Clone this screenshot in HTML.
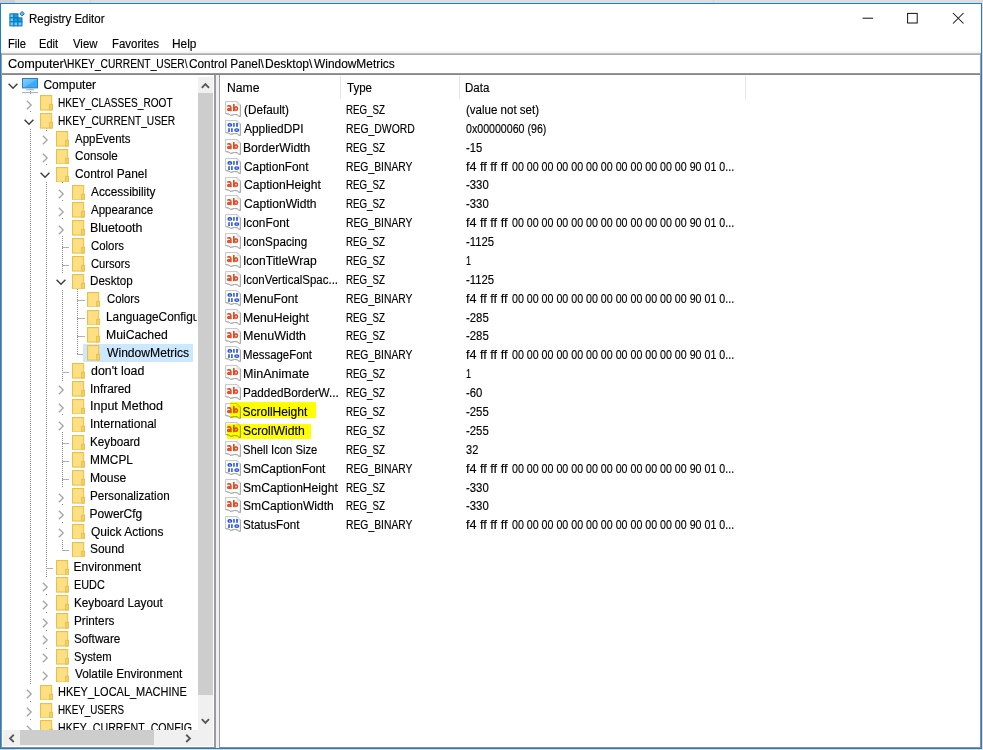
<!DOCTYPE html>
<html><head><meta charset="utf-8"><title>Registry Editor</title>
<style>
html,body{margin:0;padding:0;width:983px;height:750px;overflow:hidden;background:#dedede}
.t{position:absolute;font-family:"Liberation Sans",sans-serif;font-size:12px;line-height:14px;white-space:pre;color:#000;transform-origin:0 0;-webkit-text-stroke:0.15px #000}
</style></head><body>
<div style="position:absolute;left:0px;top:0px;width:983px;height:750px;background:#dedede;"></div><div style="position:absolute;left:0px;top:0px;width:15px;height:3px;background:#cfcfcf;"></div><div style="position:absolute;left:90px;top:0px;width:1px;height:3px;background:#d2d2d2;"></div><div style="position:absolute;left:713px;top:0px;width:1px;height:3px;background:#d2d2d2;"></div><div style="position:absolute;left:0px;top:749px;width:15px;height:1px;background:#cfcfcf;"></div><div style="position:absolute;left:0;top:3px;width:982px;height:746px;box-sizing:border-box;border:1px solid #1c7fd7;background:#fff"></div><svg style="position:absolute;left:8.5px;top:10.5px;" width="18" height="17" viewBox="-0.93 -2.84 18 17"><rect x="0.00" y="0.00" width="4.02" height="4.02" fill="#5ad1fa" stroke="#1170b6" stroke-width="1"/><rect x="4.02" y="0.00" width="4.02" height="4.02" fill="#12a7dc" stroke="#1170b6" stroke-width="1"/><rect x="0.00" y="4.02" width="4.02" height="4.02" fill="#5ad1fa" stroke="#1170b6" stroke-width="1"/><rect x="4.02" y="4.02" width="4.02" height="4.02" fill="#12a7dc" stroke="#1170b6" stroke-width="1"/><rect x="8.04" y="4.02" width="4.02" height="4.02" fill="#12a7dc" stroke="#1170b6" stroke-width="1"/><rect x="0.00" y="8.04" width="4.02" height="4.02" fill="#5ad1fa" stroke="#1170b6" stroke-width="1"/><rect x="4.02" y="8.04" width="4.02" height="4.02" fill="#5ad1fa" stroke="#1170b6" stroke-width="1"/><rect x="8.04" y="8.04" width="4.02" height="4.02" fill="#5ad1fa" stroke="#1170b6" stroke-width="1"/><path d="M12.17 -2.34 L14.37 -0.14 L12.17 2.06 L9.97 -0.14 Z" fill="#4cc8f6" stroke="#1170b6" stroke-width="1"/></svg><div class="t" style="left:29.44px;top:11.90px;transform:scaleX(0.9590);">Registry Editor</div><svg style="position:absolute;left:850px;top:5px;" width="130" height="28" viewBox="850 5 130 28"><rect x="862.6" y="17.7" width="10.5" height="1" fill="#111"/><rect x="907.6" y="13.4" width="9.6" height="9.6" fill="none" stroke="#111" stroke-width="1"/><path d="M953 13 L963.5 23.5 M963.5 13 L953 23.5" stroke="#111" stroke-width="1.05"/></svg><div class="t" style="left:7.77px;top:36.80px;transform:scaleX(0.9333);">File</div><div class="t" style="left:39.38px;top:36.80px;transform:scaleX(0.9250);">Edit</div><div class="t" style="left:73.30px;top:36.80px;transform:scaleX(0.9462);">View</div><div class="t" style="left:111.85px;top:36.80px;transform:scaleX(0.9542);">Favorites</div><div class="t" style="left:172.31px;top:36.80px;transform:scaleX(0.9917);">Help</div><div style="position:absolute;left:1px;top:51px;width:980px;height:2px;background:linear-gradient(#fbfbfb,#f0f0f0);"></div><div style="position:absolute;left:1px;top:53px;width:980px;height:1px;background:#c4c4c4;"></div><div style="position:absolute;left:1px;top:54px;width:980px;height:1px;background:#a9a9a9;"></div><div style="position:absolute;left:1px;top:73px;width:980px;height:1px;background:#96969c;"></div><div style="position:absolute;left:1px;top:74px;width:980px;height:1px;background:#84848a;"></div><div style="position:absolute;left:1px;top:53px;width:1px;height:22px;background:#a0a0a0;"></div><div style="position:absolute;left:980px;top:53px;width:1px;height:22px;background:#a0a0a0;"></div><div class="t" style="left:7.60px;top:56.90px;transform:scaleX(1.0589);">Computer\</div><div class="t" style="left:66.85px;top:56.90px;transform:scaleX(0.8532);">HKEY_CURRENT_USER\</div><div class="t" style="left:188.80px;top:56.90px;transform:scaleX(0.9842);">Control Panel\</div><div class="t" style="left:265.00px;top:56.90px;">Desktop\</div><div class="t" style="left:313.60px;top:56.90px;transform:scaleX(0.9926);">WindowMetrics</div><div style="position:absolute;left:1px;top:75px;width:1px;height:673px;background:#8e8f94;"></div><div style="position:absolute;left:214px;top:75px;width:1.5px;height:673px;background:#9a9ba0;"></div><div style="position:absolute;left:1px;top:747px;width:215px;height:1px;background:#8e8f94;"></div><div style="position:absolute;left:215.5px;top:75px;width:3.3px;height:673px;background:#f0f0f0;"></div><div style="position:absolute;left:218.8px;top:75px;width:1.6px;height:673px;background:#9a9ba0;"></div><div style="position:absolute;left:979.6px;top:75px;width:1.3px;height:673px;background:#8e8f94;"></div><div style="position:absolute;left:219px;top:747px;width:762px;height:1px;background:#8e8f94;"></div><div style="position:absolute;left:3px;top:76px;width:193.5px;height:654px;overflow:hidden"><div style="position:absolute;left:-3px;top:-76px;width:983px;height:750px"><div style="position:absolute;left:30.00px;top:86.60px;width:1.00px;height:715.40px;background:repeating-linear-gradient(#8a8a8a 0 1px, transparent 1px 2px);"></div><div style="position:absolute;left:46.00px;top:122.32px;width:1.00px;height:554.66px;background:repeating-linear-gradient(#8a8a8a 0 1px, transparent 1px 2px);"></div><div style="position:absolute;left:62.00px;top:175.90px;width:1.00px;height:376.06px;background:repeating-linear-gradient(#8a8a8a 0 1px, transparent 1px 2px);"></div><div style="position:absolute;left:77.00px;top:283.06px;width:1.00px;height:72.44px;background:repeating-linear-gradient(#8a8a8a 0 1px, transparent 1px 2px);"></div><div style="position:absolute;left:62.00px;top:247.00px;width:7.00px;height:1.00px;background:#b0b0b0;"></div><div style="position:absolute;left:62.00px;top:265.00px;width:7.00px;height:1.00px;background:#b0b0b0;"></div><div style="position:absolute;left:77.00px;top:300.00px;width:7.90px;height:1.00px;background:#b0b0b0;"></div><div style="position:absolute;left:77.00px;top:318.00px;width:7.90px;height:1.00px;background:#b0b0b0;"></div><div style="position:absolute;left:77.00px;top:336.00px;width:7.90px;height:1.00px;background:#b0b0b0;"></div><div style="position:absolute;left:77.00px;top:354.00px;width:7.90px;height:1.00px;background:#b0b0b0;"></div><div style="position:absolute;left:62.00px;top:372.00px;width:7.00px;height:1.00px;background:#b0b0b0;"></div><div style="position:absolute;left:62.00px;top:443.00px;width:7.00px;height:1.00px;background:#b0b0b0;"></div><div style="position:absolute;left:62.00px;top:461.00px;width:7.00px;height:1.00px;background:#b0b0b0;"></div><div style="position:absolute;left:62.00px;top:479.00px;width:7.00px;height:1.00px;background:#b0b0b0;"></div><div style="position:absolute;left:62.00px;top:550.00px;width:7.00px;height:1.00px;background:#b0b0b0;"></div><div style="position:absolute;left:46.00px;top:568.00px;width:7.30px;height:1.00px;background:#b0b0b0;"></div><div style="position:absolute;left:83.30px;top:344.40px;width:109.50px;height:17.40px;background:#cce8ff;"></div><div style="position:absolute;left:5.30px;top:77.00px;width:16.00px;height:16.00px;background:#fff;"></div><svg style="position:absolute;left:7.30px;top:79.90px" width="12" height="12" viewBox="-6 -6 12 12"><path d="M-4.4 -2.2 L0 2.2 L4.4 -2.2" fill="none" stroke="#404040" stroke-width="1.45"/></svg><svg style="position:absolute;left:21.9px;top:78px" width="16" height="15.5" viewBox="0 0 16 15.5"><defs><linearGradient id="scr" x1="0" y1="0" x2="1" y2="1"><stop offset="0" stop-color="#8ad0ff"/><stop offset="0.5" stop-color="#5ebdfb"/><stop offset="0.55" stop-color="#3badf7"/><stop offset="1" stop-color="#33aaf5"/></linearGradient></defs><rect x="0.5" y="0.5" width="15" height="9.4" fill="url(#scr)" stroke="#2b7fc2" stroke-width="1"/><rect x="7.3" y="10.3" width="1.4" height="1.2" fill="#b4c0cc"/><rect x="4.1" y="11.2" width="7.8" height="1.1" fill="#a7b3c2"/><rect x="0" y="14" width="16" height="1.1" fill="#a9b5c4"/></svg><div class="t" style="left:43.40px;top:78.00px;">Computer</div><div style="position:absolute;left:21.25px;top:94.86px;width:16.00px;height:16.00px;background:#fff;"></div><svg style="position:absolute;left:23.25px;top:98.66px" width="12" height="12" viewBox="-6 -6 12 12"><path d="M-2.15 -4.3 L2.15 0 L-2.15 4.3" fill="none" stroke="#a6a6a6" stroke-width="1.35"/></svg><svg style="position:absolute;left:40.00px;top:95.26px" width="13" height="15.6" viewBox="0 0 13 15.6"><rect x="0.5" y="0.5" width="11.2" height="14.6" fill="#fbd970" stroke="#ebc04a" stroke-width="1"/><rect x="1.5" y="1.5" width="9.2" height="12.6" fill="#fde083"/><rect x="9.7" y="9.3" width="2.8" height="5.8" fill="#f4d165" stroke="#e8bd45" stroke-width="0.9"/></svg><div class="t" style="left:58.46px;top:95.86px;transform:scaleX(0.8422);">HKEY_CLASSES_ROOT</div><div style="position:absolute;left:21.25px;top:112.72px;width:16.00px;height:16.00px;background:#fff;"></div><svg style="position:absolute;left:23.25px;top:115.62px" width="12" height="12" viewBox="-6 -6 12 12"><path d="M-4.4 -2.2 L0 2.2 L4.4 -2.2" fill="none" stroke="#404040" stroke-width="1.45"/></svg><svg style="position:absolute;left:40.00px;top:113.12px" width="13" height="15.6" viewBox="0 0 13 15.6"><rect x="0.5" y="0.5" width="11.2" height="14.6" fill="#fbd970" stroke="#ebc04a" stroke-width="1"/><rect x="1.5" y="1.5" width="9.2" height="12.6" fill="#fde083"/><rect x="9.7" y="9.3" width="2.8" height="5.8" fill="#f4d165" stroke="#e8bd45" stroke-width="0.9"/></svg><div class="t" style="left:58.45px;top:113.72px;transform:scaleX(0.8489);">HKEY_CURRENT_USER</div><div style="position:absolute;left:37.20px;top:130.58px;width:16.00px;height:16.00px;background:#fff;"></div><svg style="position:absolute;left:39.20px;top:134.38px" width="12" height="12" viewBox="-6 -6 12 12"><path d="M-2.15 -4.3 L2.15 0 L-2.15 4.3" fill="none" stroke="#a6a6a6" stroke-width="1.35"/></svg><svg style="position:absolute;left:55.80px;top:130.98px" width="13" height="15.6" viewBox="0 0 13 15.6"><rect x="0.5" y="0.5" width="11.2" height="14.6" fill="#fbd970" stroke="#ebc04a" stroke-width="1"/><rect x="1.5" y="1.5" width="9.2" height="12.6" fill="#fde083"/><rect x="9.7" y="9.3" width="2.8" height="5.8" fill="#f4d165" stroke="#e8bd45" stroke-width="0.9"/></svg><div class="t" style="left:74.60px;top:131.58px;transform:scaleX(0.9552);">AppEvents</div><div style="position:absolute;left:37.20px;top:148.44px;width:16.00px;height:16.00px;background:#fff;"></div><svg style="position:absolute;left:39.20px;top:152.24px" width="12" height="12" viewBox="-6 -6 12 12"><path d="M-2.15 -4.3 L2.15 0 L-2.15 4.3" fill="none" stroke="#a6a6a6" stroke-width="1.35"/></svg><svg style="position:absolute;left:55.80px;top:148.84px" width="13" height="15.6" viewBox="0 0 13 15.6"><rect x="0.5" y="0.5" width="11.2" height="14.6" fill="#fbd970" stroke="#ebc04a" stroke-width="1"/><rect x="1.5" y="1.5" width="9.2" height="12.6" fill="#fde083"/><rect x="9.7" y="9.3" width="2.8" height="5.8" fill="#f4d165" stroke="#e8bd45" stroke-width="0.9"/></svg><div class="t" style="left:74.60px;top:149.44px;transform:scaleX(0.9727);">Console</div><div style="position:absolute;left:37.20px;top:166.30px;width:16.00px;height:16.00px;background:#fff;"></div><svg style="position:absolute;left:39.20px;top:169.20px" width="12" height="12" viewBox="-6 -6 12 12"><path d="M-4.4 -2.2 L0 2.2 L4.4 -2.2" fill="none" stroke="#404040" stroke-width="1.45"/></svg><svg style="position:absolute;left:55.80px;top:166.70px" width="13" height="15.6" viewBox="0 0 13 15.6"><rect x="0.5" y="0.5" width="11.2" height="14.6" fill="#fbd970" stroke="#ebc04a" stroke-width="1"/><rect x="1.5" y="1.5" width="9.2" height="12.6" fill="#fde083"/><rect x="9.7" y="9.3" width="2.8" height="5.8" fill="#f4d165" stroke="#e8bd45" stroke-width="0.9"/></svg><div class="t" style="left:74.60px;top:167.30px;transform:scaleX(0.9917);">Control Panel</div><div style="position:absolute;left:53.15px;top:184.16px;width:16.00px;height:16.00px;background:#fff;"></div><svg style="position:absolute;left:55.15px;top:187.96px" width="12" height="12" viewBox="-6 -6 12 12"><path d="M-2.15 -4.3 L2.15 0 L-2.15 4.3" fill="none" stroke="#a6a6a6" stroke-width="1.35"/></svg><svg style="position:absolute;left:71.50px;top:184.56px" width="13" height="15.6" viewBox="0 0 13 15.6"><rect x="0.5" y="0.5" width="11.2" height="14.6" fill="#fbd970" stroke="#ebc04a" stroke-width="1"/><rect x="1.5" y="1.5" width="9.2" height="12.6" fill="#fde083"/><rect x="9.7" y="9.3" width="2.8" height="5.8" fill="#f4d165" stroke="#e8bd45" stroke-width="0.9"/></svg><div class="t" style="left:90.60px;top:185.16px;transform:scaleX(0.9862);">Accessibility</div><div style="position:absolute;left:53.15px;top:202.02px;width:16.00px;height:16.00px;background:#fff;"></div><svg style="position:absolute;left:55.15px;top:205.82px" width="12" height="12" viewBox="-6 -6 12 12"><path d="M-2.15 -4.3 L2.15 0 L-2.15 4.3" fill="none" stroke="#a6a6a6" stroke-width="1.35"/></svg><svg style="position:absolute;left:71.50px;top:202.42px" width="13" height="15.6" viewBox="0 0 13 15.6"><rect x="0.5" y="0.5" width="11.2" height="14.6" fill="#fbd970" stroke="#ebc04a" stroke-width="1"/><rect x="1.5" y="1.5" width="9.2" height="12.6" fill="#fde083"/><rect x="9.7" y="9.3" width="2.8" height="5.8" fill="#f4d165" stroke="#e8bd45" stroke-width="0.9"/></svg><div class="t" style="left:90.60px;top:203.02px;transform:scaleX(0.9600);">Appearance</div><div style="position:absolute;left:53.15px;top:219.88px;width:16.00px;height:16.00px;background:#fff;"></div><svg style="position:absolute;left:55.15px;top:223.68px" width="12" height="12" viewBox="-6 -6 12 12"><path d="M-2.15 -4.3 L2.15 0 L-2.15 4.3" fill="none" stroke="#a6a6a6" stroke-width="1.35"/></svg><svg style="position:absolute;left:71.50px;top:220.28px" width="13" height="15.6" viewBox="0 0 13 15.6"><rect x="0.5" y="0.5" width="11.2" height="14.6" fill="#fbd970" stroke="#ebc04a" stroke-width="1"/><rect x="1.5" y="1.5" width="9.2" height="12.6" fill="#fde083"/><rect x="9.7" y="9.3" width="2.8" height="5.8" fill="#f4d165" stroke="#e8bd45" stroke-width="0.9"/></svg><div class="t" style="left:89.57px;top:220.88px;transform:scaleX(1.0347);">Bluetooth</div><svg style="position:absolute;left:71.50px;top:238.14px" width="13" height="15.6" viewBox="0 0 13 15.6"><rect x="0.5" y="0.5" width="11.2" height="14.6" fill="#fbd970" stroke="#ebc04a" stroke-width="1"/><rect x="1.5" y="1.5" width="9.2" height="12.6" fill="#fde083"/><rect x="9.7" y="9.3" width="2.8" height="5.8" fill="#f4d165" stroke="#e8bd45" stroke-width="0.9"/></svg><div class="t" style="left:90.60px;top:238.74px;transform:scaleX(0.9486);">Colors</div><svg style="position:absolute;left:71.50px;top:256.00px" width="13" height="15.6" viewBox="0 0 13 15.6"><rect x="0.5" y="0.5" width="11.2" height="14.6" fill="#fbd970" stroke="#ebc04a" stroke-width="1"/><rect x="1.5" y="1.5" width="9.2" height="12.6" fill="#fde083"/><rect x="9.7" y="9.3" width="2.8" height="5.8" fill="#f4d165" stroke="#e8bd45" stroke-width="0.9"/></svg><div class="t" style="left:90.60px;top:256.60px;transform:scaleX(0.9310);">Cursors</div><div style="position:absolute;left:53.15px;top:273.46px;width:16.00px;height:16.00px;background:#fff;"></div><svg style="position:absolute;left:55.15px;top:276.36px" width="12" height="12" viewBox="-6 -6 12 12"><path d="M-4.4 -2.2 L0 2.2 L4.4 -2.2" fill="none" stroke="#404040" stroke-width="1.45"/></svg><svg style="position:absolute;left:71.50px;top:273.86px" width="13" height="15.6" viewBox="0 0 13 15.6"><rect x="0.5" y="0.5" width="11.2" height="14.6" fill="#fbd970" stroke="#ebc04a" stroke-width="1"/><rect x="1.5" y="1.5" width="9.2" height="12.6" fill="#fde083"/><rect x="9.7" y="9.3" width="2.8" height="5.8" fill="#f4d165" stroke="#e8bd45" stroke-width="0.9"/></svg><div class="t" style="left:89.63px;top:274.46px;transform:scaleX(0.9674);">Desktop</div><svg style="position:absolute;left:87.40px;top:291.72px" width="13" height="15.6" viewBox="0 0 13 15.6"><rect x="0.5" y="0.5" width="11.2" height="14.6" fill="#fbd970" stroke="#ebc04a" stroke-width="1"/><rect x="1.5" y="1.5" width="9.2" height="12.6" fill="#fde083"/><rect x="9.7" y="9.3" width="2.8" height="5.8" fill="#f4d165" stroke="#e8bd45" stroke-width="0.9"/></svg><div class="t" style="left:106.80px;top:292.32px;transform:scaleX(0.9457);">Colors</div><svg style="position:absolute;left:87.40px;top:309.58px" width="13" height="15.6" viewBox="0 0 13 15.6"><rect x="0.5" y="0.5" width="11.2" height="14.6" fill="#fbd970" stroke="#ebc04a" stroke-width="1"/><rect x="1.5" y="1.5" width="9.2" height="12.6" fill="#fde083"/><rect x="9.7" y="9.3" width="2.8" height="5.8" fill="#f4d165" stroke="#e8bd45" stroke-width="0.9"/></svg><div class="t" style="left:105.81px;top:310.18px;transform:scaleX(0.9850);">LanguageConfiguration</div><svg style="position:absolute;left:87.40px;top:327.44px" width="13" height="15.6" viewBox="0 0 13 15.6"><rect x="0.5" y="0.5" width="11.2" height="14.6" fill="#fbd970" stroke="#ebc04a" stroke-width="1"/><rect x="1.5" y="1.5" width="9.2" height="12.6" fill="#fde083"/><rect x="9.7" y="9.3" width="2.8" height="5.8" fill="#f4d165" stroke="#e8bd45" stroke-width="0.9"/></svg><div class="t" style="left:105.78px;top:328.04px;transform:scaleX(1.0169);">MuiCached</div><svg style="position:absolute;left:87.40px;top:345.30px" width="13" height="15.6" viewBox="0 0 13 15.6"><rect x="0.5" y="0.5" width="11.2" height="14.6" fill="#fbd970" stroke="#ebc04a" stroke-width="1"/><rect x="1.5" y="1.5" width="9.2" height="12.6" fill="#fde083"/><rect x="9.7" y="9.3" width="2.8" height="5.8" fill="#f4d165" stroke="#e8bd45" stroke-width="0.9"/></svg><div class="t" style="left:106.80px;top:345.90px;transform:scaleX(1.0099);">WindowMetrics</div><svg style="position:absolute;left:71.50px;top:363.16px" width="13" height="15.6" viewBox="0 0 13 15.6"><rect x="0.5" y="0.5" width="11.2" height="14.6" fill="#fbd970" stroke="#ebc04a" stroke-width="1"/><rect x="1.5" y="1.5" width="9.2" height="12.6" fill="#fde083"/><rect x="9.7" y="9.3" width="2.8" height="5.8" fill="#f4d165" stroke="#e8bd45" stroke-width="0.9"/></svg><div class="t" style="left:90.60px;top:363.76px;transform:scaleX(1.0314);">don't load</div><div style="position:absolute;left:53.15px;top:380.62px;width:16.00px;height:16.00px;background:#fff;"></div><svg style="position:absolute;left:55.15px;top:384.42px" width="12" height="12" viewBox="-6 -6 12 12"><path d="M-2.15 -4.3 L2.15 0 L-2.15 4.3" fill="none" stroke="#a6a6a6" stroke-width="1.35"/></svg><svg style="position:absolute;left:71.50px;top:381.02px" width="13" height="15.6" viewBox="0 0 13 15.6"><rect x="0.5" y="0.5" width="11.2" height="14.6" fill="#fbd970" stroke="#ebc04a" stroke-width="1"/><rect x="1.5" y="1.5" width="9.2" height="12.6" fill="#fde083"/><rect x="9.7" y="9.3" width="2.8" height="5.8" fill="#f4d165" stroke="#e8bd45" stroke-width="0.9"/></svg><div class="t" style="left:89.61px;top:381.62px;transform:scaleX(0.9900);">Infrared</div><div style="position:absolute;left:53.15px;top:398.48px;width:16.00px;height:16.00px;background:#fff;"></div><svg style="position:absolute;left:55.15px;top:402.28px" width="12" height="12" viewBox="-6 -6 12 12"><path d="M-2.15 -4.3 L2.15 0 L-2.15 4.3" fill="none" stroke="#a6a6a6" stroke-width="1.35"/></svg><svg style="position:absolute;left:71.50px;top:398.88px" width="13" height="15.6" viewBox="0 0 13 15.6"><rect x="0.5" y="0.5" width="11.2" height="14.6" fill="#fbd970" stroke="#ebc04a" stroke-width="1"/><rect x="1.5" y="1.5" width="9.2" height="12.6" fill="#fde083"/><rect x="9.7" y="9.3" width="2.8" height="5.8" fill="#f4d165" stroke="#e8bd45" stroke-width="0.9"/></svg><div class="t" style="left:89.56px;top:399.48px;transform:scaleX(1.0420);">Input Method</div><div style="position:absolute;left:53.15px;top:416.34px;width:16.00px;height:16.00px;background:#fff;"></div><svg style="position:absolute;left:55.15px;top:420.14px" width="12" height="12" viewBox="-6 -6 12 12"><path d="M-2.15 -4.3 L2.15 0 L-2.15 4.3" fill="none" stroke="#a6a6a6" stroke-width="1.35"/></svg><svg style="position:absolute;left:71.50px;top:416.74px" width="13" height="15.6" viewBox="0 0 13 15.6"><rect x="0.5" y="0.5" width="11.2" height="14.6" fill="#fbd970" stroke="#ebc04a" stroke-width="1"/><rect x="1.5" y="1.5" width="9.2" height="12.6" fill="#fde083"/><rect x="9.7" y="9.3" width="2.8" height="5.8" fill="#f4d165" stroke="#e8bd45" stroke-width="0.9"/></svg><div class="t" style="left:89.59px;top:417.34px;transform:scaleX(1.0077);">International</div><svg style="position:absolute;left:71.50px;top:434.60px" width="13" height="15.6" viewBox="0 0 13 15.6"><rect x="0.5" y="0.5" width="11.2" height="14.6" fill="#fbd970" stroke="#ebc04a" stroke-width="1"/><rect x="1.5" y="1.5" width="9.2" height="12.6" fill="#fde083"/><rect x="9.7" y="9.3" width="2.8" height="5.8" fill="#f4d165" stroke="#e8bd45" stroke-width="0.9"/></svg><div class="t" style="left:89.63px;top:435.20px;transform:scaleX(0.9740);">Keyboard</div><svg style="position:absolute;left:71.50px;top:452.46px" width="13" height="15.6" viewBox="0 0 13 15.6"><rect x="0.5" y="0.5" width="11.2" height="14.6" fill="#fbd970" stroke="#ebc04a" stroke-width="1"/><rect x="1.5" y="1.5" width="9.2" height="12.6" fill="#fde083"/><rect x="9.7" y="9.3" width="2.8" height="5.8" fill="#f4d165" stroke="#e8bd45" stroke-width="0.9"/></svg><div class="t" style="left:89.61px;top:453.06px;transform:scaleX(0.9905);">MMCPL</div><svg style="position:absolute;left:71.50px;top:470.32px" width="13" height="15.6" viewBox="0 0 13 15.6"><rect x="0.5" y="0.5" width="11.2" height="14.6" fill="#fbd970" stroke="#ebc04a" stroke-width="1"/><rect x="1.5" y="1.5" width="9.2" height="12.6" fill="#fde083"/><rect x="9.7" y="9.3" width="2.8" height="5.8" fill="#f4d165" stroke="#e8bd45" stroke-width="0.9"/></svg><div class="t" style="left:89.59px;top:470.92px;transform:scaleX(1.0086);">Mouse</div><div style="position:absolute;left:53.15px;top:487.78px;width:16.00px;height:16.00px;background:#fff;"></div><svg style="position:absolute;left:55.15px;top:491.58px" width="12" height="12" viewBox="-6 -6 12 12"><path d="M-2.15 -4.3 L2.15 0 L-2.15 4.3" fill="none" stroke="#a6a6a6" stroke-width="1.35"/></svg><svg style="position:absolute;left:71.50px;top:488.18px" width="13" height="15.6" viewBox="0 0 13 15.6"><rect x="0.5" y="0.5" width="11.2" height="14.6" fill="#fbd970" stroke="#ebc04a" stroke-width="1"/><rect x="1.5" y="1.5" width="9.2" height="12.6" fill="#fde083"/><rect x="9.7" y="9.3" width="2.8" height="5.8" fill="#f4d165" stroke="#e8bd45" stroke-width="0.9"/></svg><div class="t" style="left:89.63px;top:488.78px;transform:scaleX(0.9704);">Personalization</div><div style="position:absolute;left:53.15px;top:505.64px;width:16.00px;height:16.00px;background:#fff;"></div><svg style="position:absolute;left:55.15px;top:509.44px" width="12" height="12" viewBox="-6 -6 12 12"><path d="M-2.15 -4.3 L2.15 0 L-2.15 4.3" fill="none" stroke="#a6a6a6" stroke-width="1.35"/></svg><svg style="position:absolute;left:71.50px;top:506.04px" width="13" height="15.6" viewBox="0 0 13 15.6"><rect x="0.5" y="0.5" width="11.2" height="14.6" fill="#fbd970" stroke="#ebc04a" stroke-width="1"/><rect x="1.5" y="1.5" width="9.2" height="12.6" fill="#fde083"/><rect x="9.7" y="9.3" width="2.8" height="5.8" fill="#f4d165" stroke="#e8bd45" stroke-width="0.9"/></svg><div class="t" style="left:89.60px;top:506.64px;">PowerCfg</div><div style="position:absolute;left:53.15px;top:523.50px;width:16.00px;height:16.00px;background:#fff;"></div><svg style="position:absolute;left:55.15px;top:527.30px" width="12" height="12" viewBox="-6 -6 12 12"><path d="M-2.15 -4.3 L2.15 0 L-2.15 4.3" fill="none" stroke="#a6a6a6" stroke-width="1.35"/></svg><svg style="position:absolute;left:71.50px;top:523.90px" width="13" height="15.6" viewBox="0 0 13 15.6"><rect x="0.5" y="0.5" width="11.2" height="14.6" fill="#fbd970" stroke="#ebc04a" stroke-width="1"/><rect x="1.5" y="1.5" width="9.2" height="12.6" fill="#fde083"/><rect x="9.7" y="9.3" width="2.8" height="5.8" fill="#f4d165" stroke="#e8bd45" stroke-width="0.9"/></svg><div class="t" style="left:90.60px;top:524.50px;transform:scaleX(0.9959);">Quick Actions</div><svg style="position:absolute;left:71.50px;top:541.76px" width="13" height="15.6" viewBox="0 0 13 15.6"><rect x="0.5" y="0.5" width="11.2" height="14.6" fill="#fbd970" stroke="#ebc04a" stroke-width="1"/><rect x="1.5" y="1.5" width="9.2" height="12.6" fill="#fde083"/><rect x="9.7" y="9.3" width="2.8" height="5.8" fill="#f4d165" stroke="#e8bd45" stroke-width="0.9"/></svg><div class="t" style="left:89.61px;top:542.36px;transform:scaleX(0.9939);">Sound</div><svg style="position:absolute;left:55.80px;top:559.62px" width="13" height="15.6" viewBox="0 0 13 15.6"><rect x="0.5" y="0.5" width="11.2" height="14.6" fill="#fbd970" stroke="#ebc04a" stroke-width="1"/><rect x="1.5" y="1.5" width="9.2" height="12.6" fill="#fde083"/><rect x="9.7" y="9.3" width="2.8" height="5.8" fill="#f4d165" stroke="#e8bd45" stroke-width="0.9"/></svg><div class="t" style="left:73.60px;top:560.22px;">Environment</div><div style="position:absolute;left:37.20px;top:577.08px;width:16.00px;height:16.00px;background:#fff;"></div><svg style="position:absolute;left:39.20px;top:580.88px" width="12" height="12" viewBox="-6 -6 12 12"><path d="M-2.15 -4.3 L2.15 0 L-2.15 4.3" fill="none" stroke="#a6a6a6" stroke-width="1.35"/></svg><svg style="position:absolute;left:55.80px;top:577.48px" width="13" height="15.6" viewBox="0 0 13 15.6"><rect x="0.5" y="0.5" width="11.2" height="14.6" fill="#fbd970" stroke="#ebc04a" stroke-width="1"/><rect x="1.5" y="1.5" width="9.2" height="12.6" fill="#fde083"/><rect x="9.7" y="9.3" width="2.8" height="5.8" fill="#f4d165" stroke="#e8bd45" stroke-width="0.9"/></svg><div class="t" style="left:73.69px;top:578.08px;transform:scaleX(0.9062);">EUDC</div><div style="position:absolute;left:37.20px;top:594.94px;width:16.00px;height:16.00px;background:#fff;"></div><svg style="position:absolute;left:39.20px;top:598.74px" width="12" height="12" viewBox="-6 -6 12 12"><path d="M-2.15 -4.3 L2.15 0 L-2.15 4.3" fill="none" stroke="#a6a6a6" stroke-width="1.35"/></svg><svg style="position:absolute;left:55.80px;top:595.34px" width="13" height="15.6" viewBox="0 0 13 15.6"><rect x="0.5" y="0.5" width="11.2" height="14.6" fill="#fbd970" stroke="#ebc04a" stroke-width="1"/><rect x="1.5" y="1.5" width="9.2" height="12.6" fill="#fde083"/><rect x="9.7" y="9.3" width="2.8" height="5.8" fill="#f4d165" stroke="#e8bd45" stroke-width="0.9"/></svg><div class="t" style="left:73.62px;top:595.94px;transform:scaleX(0.9789);">Keyboard Layout</div><div style="position:absolute;left:37.20px;top:612.80px;width:16.00px;height:16.00px;background:#fff;"></div><svg style="position:absolute;left:39.20px;top:616.60px" width="12" height="12" viewBox="-6 -6 12 12"><path d="M-2.15 -4.3 L2.15 0 L-2.15 4.3" fill="none" stroke="#a6a6a6" stroke-width="1.35"/></svg><svg style="position:absolute;left:55.80px;top:613.20px" width="13" height="15.6" viewBox="0 0 13 15.6"><rect x="0.5" y="0.5" width="11.2" height="14.6" fill="#fbd970" stroke="#ebc04a" stroke-width="1"/><rect x="1.5" y="1.5" width="9.2" height="12.6" fill="#fde083"/><rect x="9.7" y="9.3" width="2.8" height="5.8" fill="#f4d165" stroke="#e8bd45" stroke-width="0.9"/></svg><div class="t" style="left:73.62px;top:613.80px;transform:scaleX(0.9775);">Printers</div><div style="position:absolute;left:37.20px;top:630.66px;width:16.00px;height:16.00px;background:#fff;"></div><svg style="position:absolute;left:39.20px;top:634.46px" width="12" height="12" viewBox="-6 -6 12 12"><path d="M-2.15 -4.3 L2.15 0 L-2.15 4.3" fill="none" stroke="#a6a6a6" stroke-width="1.35"/></svg><svg style="position:absolute;left:55.80px;top:631.06px" width="13" height="15.6" viewBox="0 0 13 15.6"><rect x="0.5" y="0.5" width="11.2" height="14.6" fill="#fbd970" stroke="#ebc04a" stroke-width="1"/><rect x="1.5" y="1.5" width="9.2" height="12.6" fill="#fde083"/><rect x="9.7" y="9.3" width="2.8" height="5.8" fill="#f4d165" stroke="#e8bd45" stroke-width="0.9"/></svg><div class="t" style="left:73.62px;top:631.66px;transform:scaleX(0.9783);">Software</div><div style="position:absolute;left:37.20px;top:648.52px;width:16.00px;height:16.00px;background:#fff;"></div><svg style="position:absolute;left:39.20px;top:652.32px" width="12" height="12" viewBox="-6 -6 12 12"><path d="M-2.15 -4.3 L2.15 0 L-2.15 4.3" fill="none" stroke="#a6a6a6" stroke-width="1.35"/></svg><svg style="position:absolute;left:55.80px;top:648.92px" width="13" height="15.6" viewBox="0 0 13 15.6"><rect x="0.5" y="0.5" width="11.2" height="14.6" fill="#fbd970" stroke="#ebc04a" stroke-width="1"/><rect x="1.5" y="1.5" width="9.2" height="12.6" fill="#fde083"/><rect x="9.7" y="9.3" width="2.8" height="5.8" fill="#f4d165" stroke="#e8bd45" stroke-width="0.9"/></svg><div class="t" style="left:73.66px;top:649.52px;transform:scaleX(0.9385);">System</div><div style="position:absolute;left:37.20px;top:666.38px;width:16.00px;height:16.00px;background:#fff;"></div><svg style="position:absolute;left:39.20px;top:670.18px" width="12" height="12" viewBox="-6 -6 12 12"><path d="M-2.15 -4.3 L2.15 0 L-2.15 4.3" fill="none" stroke="#a6a6a6" stroke-width="1.35"/></svg><svg style="position:absolute;left:55.80px;top:666.78px" width="13" height="15.6" viewBox="0 0 13 15.6"><rect x="0.5" y="0.5" width="11.2" height="14.6" fill="#fbd970" stroke="#ebc04a" stroke-width="1"/><rect x="1.5" y="1.5" width="9.2" height="12.6" fill="#fde083"/><rect x="9.7" y="9.3" width="2.8" height="5.8" fill="#f4d165" stroke="#e8bd45" stroke-width="0.9"/></svg><div class="t" style="left:74.60px;top:667.38px;transform:scaleX(0.9809);">Volatile Environment</div><div style="position:absolute;left:21.25px;top:684.24px;width:16.00px;height:16.00px;background:#fff;"></div><svg style="position:absolute;left:23.25px;top:688.04px" width="12" height="12" viewBox="-6 -6 12 12"><path d="M-2.15 -4.3 L2.15 0 L-2.15 4.3" fill="none" stroke="#a6a6a6" stroke-width="1.35"/></svg><svg style="position:absolute;left:40.00px;top:684.64px" width="13" height="15.6" viewBox="0 0 13 15.6"><rect x="0.5" y="0.5" width="11.2" height="14.6" fill="#fbd970" stroke="#ebc04a" stroke-width="1"/><rect x="1.5" y="1.5" width="9.2" height="12.6" fill="#fde083"/><rect x="9.7" y="9.3" width="2.8" height="5.8" fill="#f4d165" stroke="#e8bd45" stroke-width="0.9"/></svg><div class="t" style="left:58.38px;top:685.24px;transform:scaleX(0.9150);">HKEY_LOCAL_MACHINE</div><div style="position:absolute;left:21.25px;top:702.10px;width:16.00px;height:16.00px;background:#fff;"></div><svg style="position:absolute;left:23.25px;top:705.90px" width="12" height="12" viewBox="-6 -6 12 12"><path d="M-2.15 -4.3 L2.15 0 L-2.15 4.3" fill="none" stroke="#a6a6a6" stroke-width="1.35"/></svg><svg style="position:absolute;left:40.00px;top:702.50px" width="13" height="15.6" viewBox="0 0 13 15.6"><rect x="0.5" y="0.5" width="11.2" height="14.6" fill="#fbd970" stroke="#ebc04a" stroke-width="1"/><rect x="1.5" y="1.5" width="9.2" height="12.6" fill="#fde083"/><rect x="9.7" y="9.3" width="2.8" height="5.8" fill="#f4d165" stroke="#e8bd45" stroke-width="0.9"/></svg><div class="t" style="left:58.48px;top:703.10px;transform:scaleX(0.8187);">HKEY_USERS</div><div style="position:absolute;left:21.25px;top:719.96px;width:16.00px;height:16.00px;background:#fff;"></div><svg style="position:absolute;left:23.25px;top:723.76px" width="12" height="12" viewBox="-6 -6 12 12"><path d="M-2.15 -4.3 L2.15 0 L-2.15 4.3" fill="none" stroke="#a6a6a6" stroke-width="1.35"/></svg><svg style="position:absolute;left:40.00px;top:720.36px" width="13" height="15.6" viewBox="0 0 13 15.6"><rect x="0.5" y="0.5" width="11.2" height="14.6" fill="#fbd970" stroke="#ebc04a" stroke-width="1"/><rect x="1.5" y="1.5" width="9.2" height="12.6" fill="#fde083"/><rect x="9.7" y="9.3" width="2.8" height="5.8" fill="#f4d165" stroke="#e8bd45" stroke-width="0.9"/></svg><div class="t" style="left:58.41px;top:720.96px;transform:scaleX(0.8850);">HKEY_CURRENT_CONFIG</div></div></div><div style="position:absolute;left:197.7px;top:77px;width:15.3px;height:653px;background:#f0f0f0;"></div><div style="position:absolute;left:198.2px;top:93px;width:14.5px;height:602px;background:#cdcdcd;"></div><div style="position:absolute;left:3.2px;top:730px;width:210px;height:16px;background:#f0f0f0;"></div><div style="position:absolute;left:20.1px;top:730.2px;width:134px;height:14.6px;background:#cdcdcd;"></div><svg style="position:absolute;left:201px;top:82px;" width="9" height="7" viewBox="0 0 9 7"><path d="M0.8 5.8 L4.4 2.1 L8 5.8" fill="none" stroke="#585858" stroke-width="1.9"/></svg><svg style="position:absolute;left:201px;top:718px;" width="9" height="7" viewBox="0 0 9 7"><path d="M0.8 1.2 L4.4 4.9 L8 1.2" fill="none" stroke="#585858" stroke-width="1.9"/></svg><svg style="position:absolute;left:7.5px;top:733.5px;" width="7" height="9" viewBox="0 0 7 9"><path d="M5.8 0.8 L2.1 4.4 L5.8 8" fill="none" stroke="#585858" stroke-width="1.9"/></svg><svg style="position:absolute;left:185px;top:733.5px;" width="7" height="9" viewBox="0 0 7 9"><path d="M1.2 0.8 L4.9 4.4 L1.2 8" fill="none" stroke="#585858" stroke-width="1.9"/></svg><div style="position:absolute;left:340px;top:76px;width:1px;height:23px;background:#e5e5e5;"></div><div style="position:absolute;left:459px;top:76px;width:1px;height:23px;background:#e5e5e5;"></div><div style="position:absolute;left:745px;top:76px;width:1px;height:23px;background:#e5e5e5;"></div><div class="t" style="left:226.68px;top:81.10px;transform:scaleX(1.0161);">Name</div><div class="t" style="left:347.20px;top:81.10px;transform:scaleX(0.9600);">Type</div><div class="t" style="left:464.84px;top:81.10px;transform:scaleX(0.9600);">Data</div><svg style="position:absolute;left:225.0px;top:101.0px;" width="16" height="16" viewBox="0 0 16 16"><path d="M0.6 0.6 H12.1 L15.4 3.9 V15.4 L13.9 15.2 L12.3 13.8 L9.5 13.5 L5.8 14.4 L3.6 13.1 L0.6 12.5 Z" fill="#fff" stroke="#bcbcbc" stroke-width="0.9"/><path d="M15.4 3.9 V15.4 L13.9 15.2 L12.3 13.8 L9.5 13.5 L5.8 14.4 L3.6 13.1 L0.6 12.5" fill="none" stroke="#a2a2a2" stroke-width="0.9"/><path d="M12.1 0.6 V3.9 H15.4" fill="none" stroke="#c8c8c8" stroke-width="0.8"/><g><path d="M2.3 5.5 C3.3 4.4 5.9 4.5 5.9 6.5 V10.2" fill="none" stroke="#e24a22" stroke-width="1.6"/><ellipse cx="3.85" cy="8.5" rx="1.15" ry="0.95" fill="none" stroke="#e24a22" stroke-width="1.6"/><rect x="8.0" y="2.9" width="1.65" height="7.3" fill="#e24a22"/><ellipse cx="11.0" cy="7.55" rx="1.55" ry="1.7" fill="none" stroke="#e24a22" stroke-width="1.6"/></g></svg><div class="t" style="left:243.60px;top:102.90px;transform:scaleX(0.9783);">(Default)</div><div class="t" style="left:346.09px;top:102.90px;transform:scaleX(0.8106);">REG_SZ</div><div class="t" style="left:466.20px;top:102.90px;transform:scaleX(0.9605);">(value not set)</div><svg style="position:absolute;left:225.0px;top:119.88px;" width="16" height="16" viewBox="0 0 16 16"><path d="M0.6 0.6 H12.1 L15.4 3.9 V15.4 L13.9 15.2 L12.3 13.8 L9.5 13.5 L5.8 14.4 L3.6 13.1 L0.6 12.5 Z" fill="#fff" stroke="#bcbcbc" stroke-width="0.9"/><path d="M15.4 3.9 V15.4 L13.9 15.2 L12.3 13.8 L9.5 13.5 L5.8 14.4 L3.6 13.1 L0.6 12.5" fill="none" stroke="#a2a2a2" stroke-width="0.9"/><path d="M12.1 0.6 V3.9 H15.4" fill="none" stroke="#c8c8c8" stroke-width="0.8"/><ellipse cx="4.8" cy="4.9" rx="1.75" ry="1.2" fill="none" stroke="#1f4edb" stroke-width="1.4"/><rect x="8.2" y="3.0" width="1.45" height="3.8" fill="#1f4edb"/><rect x="11.2" y="3.0" width="1.6" height="3.8" fill="#1f4edb"/><rect x="3.25" y="8.2" width="1.5" height="3.8" fill="#1f4edb"/><rect x="6.15" y="8.2" width="1.5" height="3.8" fill="#1f4edb"/><ellipse cx="11.75" cy="10.1" rx="1.85" ry="1.2" fill="none" stroke="#1f4edb" stroke-width="1.4"/></svg><div class="t" style="left:243.60px;top:121.78px;transform:scaleX(0.9915);">AppliedDPI</div><div class="t" style="left:346.03px;top:121.78px;transform:scaleX(0.8667);">REG_DWORD</div><div class="t" style="left:466.20px;top:121.78px;transform:scaleX(0.8856);">0x00000060 (96)</div><svg style="position:absolute;left:225.0px;top:138.76px;" width="16" height="16" viewBox="0 0 16 16"><path d="M0.6 0.6 H12.1 L15.4 3.9 V15.4 L13.9 15.2 L12.3 13.8 L9.5 13.5 L5.8 14.4 L3.6 13.1 L0.6 12.5 Z" fill="#fff" stroke="#bcbcbc" stroke-width="0.9"/><path d="M15.4 3.9 V15.4 L13.9 15.2 L12.3 13.8 L9.5 13.5 L5.8 14.4 L3.6 13.1 L0.6 12.5" fill="none" stroke="#a2a2a2" stroke-width="0.9"/><path d="M12.1 0.6 V3.9 H15.4" fill="none" stroke="#c8c8c8" stroke-width="0.8"/><g><path d="M2.3 5.5 C3.3 4.4 5.9 4.5 5.9 6.5 V10.2" fill="none" stroke="#e24a22" stroke-width="1.6"/><ellipse cx="3.85" cy="8.5" rx="1.15" ry="0.95" fill="none" stroke="#e24a22" stroke-width="1.6"/><rect x="8.0" y="2.9" width="1.65" height="7.3" fill="#e24a22"/><ellipse cx="11.0" cy="7.55" rx="1.55" ry="1.7" fill="none" stroke="#e24a22" stroke-width="1.6"/></g></svg><div class="t" style="left:242.59px;top:140.66px;transform:scaleX(1.0077);">BorderWidth</div><div class="t" style="left:346.09px;top:140.66px;transform:scaleX(0.8106);">REG_SZ</div><div class="t" style="left:466.20px;top:140.66px;transform:scaleX(0.9353);">-15</div><svg style="position:absolute;left:225.0px;top:157.64px;" width="16" height="16" viewBox="0 0 16 16"><path d="M0.6 0.6 H12.1 L15.4 3.9 V15.4 L13.9 15.2 L12.3 13.8 L9.5 13.5 L5.8 14.4 L3.6 13.1 L0.6 12.5 Z" fill="#fff" stroke="#bcbcbc" stroke-width="0.9"/><path d="M15.4 3.9 V15.4 L13.9 15.2 L12.3 13.8 L9.5 13.5 L5.8 14.4 L3.6 13.1 L0.6 12.5" fill="none" stroke="#a2a2a2" stroke-width="0.9"/><path d="M12.1 0.6 V3.9 H15.4" fill="none" stroke="#c8c8c8" stroke-width="0.8"/><ellipse cx="4.8" cy="4.9" rx="1.75" ry="1.2" fill="none" stroke="#1f4edb" stroke-width="1.4"/><rect x="8.2" y="3.0" width="1.45" height="3.8" fill="#1f4edb"/><rect x="11.2" y="3.0" width="1.6" height="3.8" fill="#1f4edb"/><rect x="3.25" y="8.2" width="1.5" height="3.8" fill="#1f4edb"/><rect x="6.15" y="8.2" width="1.5" height="3.8" fill="#1f4edb"/><ellipse cx="11.75" cy="10.1" rx="1.85" ry="1.2" fill="none" stroke="#1f4edb" stroke-width="1.4"/></svg><div class="t" style="left:243.60px;top:159.54px;transform:scaleX(0.9864);">CaptionFont</div><div class="t" style="left:346.04px;top:159.54px;transform:scaleX(0.8618);">REG_BINARY</div><div class="t" style="left:465.70px;top:159.54px;transform:scaleX(1.0525);">f4 ff ff ff</div><div class="t" style="left:511.90px;top:159.54px;transform:scaleX(0.8876);">00 00 00 00 00 00 00 00 00 00 00 00 90 01 0...</div><svg style="position:absolute;left:225.0px;top:176.52px;" width="16" height="16" viewBox="0 0 16 16"><path d="M0.6 0.6 H12.1 L15.4 3.9 V15.4 L13.9 15.2 L12.3 13.8 L9.5 13.5 L5.8 14.4 L3.6 13.1 L0.6 12.5 Z" fill="#fff" stroke="#bcbcbc" stroke-width="0.9"/><path d="M15.4 3.9 V15.4 L13.9 15.2 L12.3 13.8 L9.5 13.5 L5.8 14.4 L3.6 13.1 L0.6 12.5" fill="none" stroke="#a2a2a2" stroke-width="0.9"/><path d="M12.1 0.6 V3.9 H15.4" fill="none" stroke="#c8c8c8" stroke-width="0.8"/><g><path d="M2.3 5.5 C3.3 4.4 5.9 4.5 5.9 6.5 V10.2" fill="none" stroke="#e24a22" stroke-width="1.6"/><ellipse cx="3.85" cy="8.5" rx="1.15" ry="0.95" fill="none" stroke="#e24a22" stroke-width="1.6"/><rect x="8.0" y="2.9" width="1.65" height="7.3" fill="#e24a22"/><ellipse cx="11.0" cy="7.55" rx="1.55" ry="1.7" fill="none" stroke="#e24a22" stroke-width="1.6"/></g></svg><div class="t" style="left:243.60px;top:178.42px;transform:scaleX(1.0105);">CaptionHeight</div><div class="t" style="left:346.09px;top:178.42px;transform:scaleX(0.8106);">REG_SZ</div><div class="t" style="left:466.20px;top:178.42px;transform:scaleX(0.9458);">-330</div><svg style="position:absolute;left:225.0px;top:195.4px;" width="16" height="16" viewBox="0 0 16 16"><path d="M0.6 0.6 H12.1 L15.4 3.9 V15.4 L13.9 15.2 L12.3 13.8 L9.5 13.5 L5.8 14.4 L3.6 13.1 L0.6 12.5 Z" fill="#fff" stroke="#bcbcbc" stroke-width="0.9"/><path d="M15.4 3.9 V15.4 L13.9 15.2 L12.3 13.8 L9.5 13.5 L5.8 14.4 L3.6 13.1 L0.6 12.5" fill="none" stroke="#a2a2a2" stroke-width="0.9"/><path d="M12.1 0.6 V3.9 H15.4" fill="none" stroke="#c8c8c8" stroke-width="0.8"/><g><path d="M2.3 5.5 C3.3 4.4 5.9 4.5 5.9 6.5 V10.2" fill="none" stroke="#e24a22" stroke-width="1.6"/><ellipse cx="3.85" cy="8.5" rx="1.15" ry="0.95" fill="none" stroke="#e24a22" stroke-width="1.6"/><rect x="8.0" y="2.9" width="1.65" height="7.3" fill="#e24a22"/><ellipse cx="11.0" cy="7.55" rx="1.55" ry="1.7" fill="none" stroke="#e24a22" stroke-width="1.6"/></g></svg><div class="t" style="left:243.60px;top:197.30px;transform:scaleX(1.0069);">CaptionWidth</div><div class="t" style="left:346.09px;top:197.30px;transform:scaleX(0.8106);">REG_SZ</div><div class="t" style="left:466.20px;top:197.30px;transform:scaleX(0.9458);">-330</div><svg style="position:absolute;left:225.0px;top:214.28px;" width="16" height="16" viewBox="0 0 16 16"><path d="M0.6 0.6 H12.1 L15.4 3.9 V15.4 L13.9 15.2 L12.3 13.8 L9.5 13.5 L5.8 14.4 L3.6 13.1 L0.6 12.5 Z" fill="#fff" stroke="#bcbcbc" stroke-width="0.9"/><path d="M15.4 3.9 V15.4 L13.9 15.2 L12.3 13.8 L9.5 13.5 L5.8 14.4 L3.6 13.1 L0.6 12.5" fill="none" stroke="#a2a2a2" stroke-width="0.9"/><path d="M12.1 0.6 V3.9 H15.4" fill="none" stroke="#c8c8c8" stroke-width="0.8"/><ellipse cx="4.8" cy="4.9" rx="1.75" ry="1.2" fill="none" stroke="#1f4edb" stroke-width="1.4"/><rect x="8.2" y="3.0" width="1.45" height="3.8" fill="#1f4edb"/><rect x="11.2" y="3.0" width="1.6" height="3.8" fill="#1f4edb"/><rect x="3.25" y="8.2" width="1.5" height="3.8" fill="#1f4edb"/><rect x="6.15" y="8.2" width="1.5" height="3.8" fill="#1f4edb"/><ellipse cx="11.75" cy="10.1" rx="1.85" ry="1.2" fill="none" stroke="#1f4edb" stroke-width="1.4"/></svg><div class="t" style="left:242.61px;top:216.18px;transform:scaleX(0.9913);">IconFont</div><div class="t" style="left:346.04px;top:216.18px;transform:scaleX(0.8618);">REG_BINARY</div><div class="t" style="left:465.70px;top:216.18px;transform:scaleX(1.0525);">f4 ff ff ff</div><div class="t" style="left:511.90px;top:216.18px;transform:scaleX(0.8876);">00 00 00 00 00 00 00 00 00 00 00 00 90 01 0...</div><svg style="position:absolute;left:225.0px;top:233.16px;" width="16" height="16" viewBox="0 0 16 16"><path d="M0.6 0.6 H12.1 L15.4 3.9 V15.4 L13.9 15.2 L12.3 13.8 L9.5 13.5 L5.8 14.4 L3.6 13.1 L0.6 12.5 Z" fill="#fff" stroke="#bcbcbc" stroke-width="0.9"/><path d="M15.4 3.9 V15.4 L13.9 15.2 L12.3 13.8 L9.5 13.5 L5.8 14.4 L3.6 13.1 L0.6 12.5" fill="none" stroke="#a2a2a2" stroke-width="0.9"/><path d="M12.1 0.6 V3.9 H15.4" fill="none" stroke="#c8c8c8" stroke-width="0.8"/><g><path d="M2.3 5.5 C3.3 4.4 5.9 4.5 5.9 6.5 V10.2" fill="none" stroke="#e24a22" stroke-width="1.6"/><ellipse cx="3.85" cy="8.5" rx="1.15" ry="0.95" fill="none" stroke="#e24a22" stroke-width="1.6"/><rect x="8.0" y="2.9" width="1.65" height="7.3" fill="#e24a22"/><ellipse cx="11.0" cy="7.55" rx="1.55" ry="1.7" fill="none" stroke="#e24a22" stroke-width="1.6"/></g></svg><div class="t" style="left:242.63px;top:235.06px;transform:scaleX(0.9738);">IconSpacing</div><div class="t" style="left:346.09px;top:235.06px;transform:scaleX(0.8106);">REG_SZ</div><div class="t" style="left:466.20px;top:235.06px;transform:scaleX(0.9433);">-1125</div><svg style="position:absolute;left:225.0px;top:252.04px;" width="16" height="16" viewBox="0 0 16 16"><path d="M0.6 0.6 H12.1 L15.4 3.9 V15.4 L13.9 15.2 L12.3 13.8 L9.5 13.5 L5.8 14.4 L3.6 13.1 L0.6 12.5 Z" fill="#fff" stroke="#bcbcbc" stroke-width="0.9"/><path d="M15.4 3.9 V15.4 L13.9 15.2 L12.3 13.8 L9.5 13.5 L5.8 14.4 L3.6 13.1 L0.6 12.5" fill="none" stroke="#a2a2a2" stroke-width="0.9"/><path d="M12.1 0.6 V3.9 H15.4" fill="none" stroke="#c8c8c8" stroke-width="0.8"/><g><path d="M2.3 5.5 C3.3 4.4 5.9 4.5 5.9 6.5 V10.2" fill="none" stroke="#e24a22" stroke-width="1.6"/><ellipse cx="3.85" cy="8.5" rx="1.15" ry="0.95" fill="none" stroke="#e24a22" stroke-width="1.6"/><rect x="8.0" y="2.9" width="1.65" height="7.3" fill="#e24a22"/><ellipse cx="11.0" cy="7.55" rx="1.55" ry="1.7" fill="none" stroke="#e24a22" stroke-width="1.6"/></g></svg><div class="t" style="left:242.60px;top:253.94px;transform:scaleX(1.0042);">IconTitleWrap</div><div class="t" style="left:346.09px;top:253.94px;transform:scaleX(0.8106);">REG_SZ</div><div class="t" style="left:466.25px;top:253.94px;transform:scaleX(0.7500);">1</div><svg style="position:absolute;left:225.0px;top:270.92px;" width="16" height="16" viewBox="0 0 16 16"><path d="M0.6 0.6 H12.1 L15.4 3.9 V15.4 L13.9 15.2 L12.3 13.8 L9.5 13.5 L5.8 14.4 L3.6 13.1 L0.6 12.5 Z" fill="#fff" stroke="#bcbcbc" stroke-width="0.9"/><path d="M15.4 3.9 V15.4 L13.9 15.2 L12.3 13.8 L9.5 13.5 L5.8 14.4 L3.6 13.1 L0.6 12.5" fill="none" stroke="#a2a2a2" stroke-width="0.9"/><path d="M12.1 0.6 V3.9 H15.4" fill="none" stroke="#c8c8c8" stroke-width="0.8"/><g><path d="M2.3 5.5 C3.3 4.4 5.9 4.5 5.9 6.5 V10.2" fill="none" stroke="#e24a22" stroke-width="1.6"/><ellipse cx="3.85" cy="8.5" rx="1.15" ry="0.95" fill="none" stroke="#e24a22" stroke-width="1.6"/><rect x="8.0" y="2.9" width="1.65" height="7.3" fill="#e24a22"/><ellipse cx="11.0" cy="7.55" rx="1.55" ry="1.7" fill="none" stroke="#e24a22" stroke-width="1.6"/></g></svg><div class="t" style="left:242.64px;top:272.82px;transform:scaleX(0.9561);">IconVerticalSpac...</div><div class="t" style="left:346.09px;top:272.82px;transform:scaleX(0.8106);">REG_SZ</div><div class="t" style="left:466.20px;top:272.82px;transform:scaleX(0.9433);">-1125</div><svg style="position:absolute;left:225.0px;top:289.8px;" width="16" height="16" viewBox="0 0 16 16"><path d="M0.6 0.6 H12.1 L15.4 3.9 V15.4 L13.9 15.2 L12.3 13.8 L9.5 13.5 L5.8 14.4 L3.6 13.1 L0.6 12.5 Z" fill="#fff" stroke="#bcbcbc" stroke-width="0.9"/><path d="M15.4 3.9 V15.4 L13.9 15.2 L12.3 13.8 L9.5 13.5 L5.8 14.4 L3.6 13.1 L0.6 12.5" fill="none" stroke="#a2a2a2" stroke-width="0.9"/><path d="M12.1 0.6 V3.9 H15.4" fill="none" stroke="#c8c8c8" stroke-width="0.8"/><ellipse cx="4.8" cy="4.9" rx="1.75" ry="1.2" fill="none" stroke="#1f4edb" stroke-width="1.4"/><rect x="8.2" y="3.0" width="1.45" height="3.8" fill="#1f4edb"/><rect x="11.2" y="3.0" width="1.6" height="3.8" fill="#1f4edb"/><rect x="3.25" y="8.2" width="1.5" height="3.8" fill="#1f4edb"/><rect x="6.15" y="8.2" width="1.5" height="3.8" fill="#1f4edb"/><ellipse cx="11.75" cy="10.1" rx="1.85" ry="1.2" fill="none" stroke="#1f4edb" stroke-width="1.4"/></svg><div class="t" style="left:242.58px;top:291.70px;transform:scaleX(1.0170);">MenuFont</div><div class="t" style="left:346.04px;top:291.70px;transform:scaleX(0.8618);">REG_BINARY</div><div class="t" style="left:465.70px;top:291.70px;transform:scaleX(1.0525);">f4 ff ff ff</div><div class="t" style="left:511.90px;top:291.70px;transform:scaleX(0.8876);">00 00 00 00 00 00 00 00 00 00 00 00 90 01 0...</div><svg style="position:absolute;left:225.0px;top:308.68px;" width="16" height="16" viewBox="0 0 16 16"><path d="M0.6 0.6 H12.1 L15.4 3.9 V15.4 L13.9 15.2 L12.3 13.8 L9.5 13.5 L5.8 14.4 L3.6 13.1 L0.6 12.5 Z" fill="#fff" stroke="#bcbcbc" stroke-width="0.9"/><path d="M15.4 3.9 V15.4 L13.9 15.2 L12.3 13.8 L9.5 13.5 L5.8 14.4 L3.6 13.1 L0.6 12.5" fill="none" stroke="#a2a2a2" stroke-width="0.9"/><path d="M12.1 0.6 V3.9 H15.4" fill="none" stroke="#c8c8c8" stroke-width="0.8"/><g><path d="M2.3 5.5 C3.3 4.4 5.9 4.5 5.9 6.5 V10.2" fill="none" stroke="#e24a22" stroke-width="1.6"/><ellipse cx="3.85" cy="8.5" rx="1.15" ry="0.95" fill="none" stroke="#e24a22" stroke-width="1.6"/><rect x="8.0" y="2.9" width="1.65" height="7.3" fill="#e24a22"/><ellipse cx="11.0" cy="7.55" rx="1.55" ry="1.7" fill="none" stroke="#e24a22" stroke-width="1.6"/></g></svg><div class="t" style="left:242.58px;top:310.58px;transform:scaleX(1.0203);">MenuHeight</div><div class="t" style="left:346.09px;top:310.58px;transform:scaleX(0.8106);">REG_SZ</div><div class="t" style="left:466.20px;top:310.58px;transform:scaleX(0.9460);">-285</div><svg style="position:absolute;left:225.0px;top:327.56px;" width="16" height="16" viewBox="0 0 16 16"><path d="M0.6 0.6 H12.1 L15.4 3.9 V15.4 L13.9 15.2 L12.3 13.8 L9.5 13.5 L5.8 14.4 L3.6 13.1 L0.6 12.5 Z" fill="#fff" stroke="#bcbcbc" stroke-width="0.9"/><path d="M15.4 3.9 V15.4 L13.9 15.2 L12.3 13.8 L9.5 13.5 L5.8 14.4 L3.6 13.1 L0.6 12.5" fill="none" stroke="#a2a2a2" stroke-width="0.9"/><path d="M12.1 0.6 V3.9 H15.4" fill="none" stroke="#c8c8c8" stroke-width="0.8"/><g><path d="M2.3 5.5 C3.3 4.4 5.9 4.5 5.9 6.5 V10.2" fill="none" stroke="#e24a22" stroke-width="1.6"/><ellipse cx="3.85" cy="8.5" rx="1.15" ry="0.95" fill="none" stroke="#e24a22" stroke-width="1.6"/><rect x="8.0" y="2.9" width="1.65" height="7.3" fill="#e24a22"/><ellipse cx="11.0" cy="7.55" rx="1.55" ry="1.7" fill="none" stroke="#e24a22" stroke-width="1.6"/></g></svg><div class="t" style="left:242.56px;top:329.46px;transform:scaleX(1.0390);">MenuWidth</div><div class="t" style="left:346.09px;top:329.46px;transform:scaleX(0.8106);">REG_SZ</div><div class="t" style="left:466.20px;top:329.46px;transform:scaleX(0.9460);">-285</div><svg style="position:absolute;left:225.0px;top:346.44px;" width="16" height="16" viewBox="0 0 16 16"><path d="M0.6 0.6 H12.1 L15.4 3.9 V15.4 L13.9 15.2 L12.3 13.8 L9.5 13.5 L5.8 14.4 L3.6 13.1 L0.6 12.5 Z" fill="#fff" stroke="#bcbcbc" stroke-width="0.9"/><path d="M15.4 3.9 V15.4 L13.9 15.2 L12.3 13.8 L9.5 13.5 L5.8 14.4 L3.6 13.1 L0.6 12.5" fill="none" stroke="#a2a2a2" stroke-width="0.9"/><path d="M12.1 0.6 V3.9 H15.4" fill="none" stroke="#c8c8c8" stroke-width="0.8"/><ellipse cx="4.8" cy="4.9" rx="1.75" ry="1.2" fill="none" stroke="#1f4edb" stroke-width="1.4"/><rect x="8.2" y="3.0" width="1.45" height="3.8" fill="#1f4edb"/><rect x="11.2" y="3.0" width="1.6" height="3.8" fill="#1f4edb"/><rect x="3.25" y="8.2" width="1.5" height="3.8" fill="#1f4edb"/><rect x="6.15" y="8.2" width="1.5" height="3.8" fill="#1f4edb"/><ellipse cx="11.75" cy="10.1" rx="1.85" ry="1.2" fill="none" stroke="#1f4edb" stroke-width="1.4"/></svg><div class="t" style="left:242.65px;top:348.34px;transform:scaleX(0.9486);">MessageFont</div><div class="t" style="left:346.04px;top:348.34px;transform:scaleX(0.8618);">REG_BINARY</div><div class="t" style="left:465.70px;top:348.34px;transform:scaleX(1.0525);">f4 ff ff ff</div><div class="t" style="left:511.90px;top:348.34px;transform:scaleX(0.8876);">00 00 00 00 00 00 00 00 00 00 00 00 90 01 0...</div><svg style="position:absolute;left:225.0px;top:365.32px;" width="16" height="16" viewBox="0 0 16 16"><path d="M0.6 0.6 H12.1 L15.4 3.9 V15.4 L13.9 15.2 L12.3 13.8 L9.5 13.5 L5.8 14.4 L3.6 13.1 L0.6 12.5 Z" fill="#fff" stroke="#bcbcbc" stroke-width="0.9"/><path d="M15.4 3.9 V15.4 L13.9 15.2 L12.3 13.8 L9.5 13.5 L5.8 14.4 L3.6 13.1 L0.6 12.5" fill="none" stroke="#a2a2a2" stroke-width="0.9"/><path d="M12.1 0.6 V3.9 H15.4" fill="none" stroke="#c8c8c8" stroke-width="0.8"/><g><path d="M2.3 5.5 C3.3 4.4 5.9 4.5 5.9 6.5 V10.2" fill="none" stroke="#e24a22" stroke-width="1.6"/><ellipse cx="3.85" cy="8.5" rx="1.15" ry="0.95" fill="none" stroke="#e24a22" stroke-width="1.6"/><rect x="8.0" y="2.9" width="1.65" height="7.3" fill="#e24a22"/><ellipse cx="11.0" cy="7.55" rx="1.55" ry="1.7" fill="none" stroke="#e24a22" stroke-width="1.6"/></g></svg><div class="t" style="left:242.56px;top:367.22px;transform:scaleX(1.0435);">MinAnimate</div><div class="t" style="left:346.09px;top:367.22px;transform:scaleX(0.8106);">REG_SZ</div><div class="t" style="left:466.25px;top:367.22px;transform:scaleX(0.7500);">1</div><svg style="position:absolute;left:225.0px;top:384.2px;" width="16" height="16" viewBox="0 0 16 16"><path d="M0.6 0.6 H12.1 L15.4 3.9 V15.4 L13.9 15.2 L12.3 13.8 L9.5 13.5 L5.8 14.4 L3.6 13.1 L0.6 12.5 Z" fill="#fff" stroke="#bcbcbc" stroke-width="0.9"/><path d="M15.4 3.9 V15.4 L13.9 15.2 L12.3 13.8 L9.5 13.5 L5.8 14.4 L3.6 13.1 L0.6 12.5" fill="none" stroke="#a2a2a2" stroke-width="0.9"/><path d="M12.1 0.6 V3.9 H15.4" fill="none" stroke="#c8c8c8" stroke-width="0.8"/><g><path d="M2.3 5.5 C3.3 4.4 5.9 4.5 5.9 6.5 V10.2" fill="none" stroke="#e24a22" stroke-width="1.6"/><ellipse cx="3.85" cy="8.5" rx="1.15" ry="0.95" fill="none" stroke="#e24a22" stroke-width="1.6"/><rect x="8.0" y="2.9" width="1.65" height="7.3" fill="#e24a22"/><ellipse cx="11.0" cy="7.55" rx="1.55" ry="1.7" fill="none" stroke="#e24a22" stroke-width="1.6"/></g></svg><div class="t" style="left:242.62px;top:386.10px;transform:scaleX(0.9771);">PaddedBorderW...</div><div class="t" style="left:346.09px;top:386.10px;transform:scaleX(0.8106);">REG_SZ</div><div class="t" style="left:466.20px;top:386.10px;transform:scaleX(0.9400);">-60</div><svg style="position:absolute;left:225.0px;top:403.08px;" width="16" height="16" viewBox="0 0 16 16"><path d="M0.6 0.6 H12.1 L15.4 3.9 V15.4 L13.9 15.2 L12.3 13.8 L9.5 13.5 L5.8 14.4 L3.6 13.1 L0.6 12.5 Z" fill="#fff" stroke="#bcbcbc" stroke-width="0.9"/><path d="M15.4 3.9 V15.4 L13.9 15.2 L12.3 13.8 L9.5 13.5 L5.8 14.4 L3.6 13.1 L0.6 12.5" fill="none" stroke="#a2a2a2" stroke-width="0.9"/><path d="M12.1 0.6 V3.9 H15.4" fill="none" stroke="#c8c8c8" stroke-width="0.8"/><g><path d="M2.3 5.5 C3.3 4.4 5.9 4.5 5.9 6.5 V10.2" fill="none" stroke="#e24a22" stroke-width="1.6"/><ellipse cx="3.85" cy="8.5" rx="1.15" ry="0.95" fill="none" stroke="#e24a22" stroke-width="1.6"/><rect x="8.0" y="2.9" width="1.65" height="7.3" fill="#e24a22"/><ellipse cx="11.0" cy="7.55" rx="1.55" ry="1.7" fill="none" stroke="#e24a22" stroke-width="1.6"/></g></svg><div class="t" style="left:242.60px;top:404.98px;">ScrollHeight</div><div class="t" style="left:346.09px;top:404.98px;transform:scaleX(0.8106);">REG_SZ</div><div class="t" style="left:466.20px;top:404.98px;transform:scaleX(0.9460);">-255</div><svg style="position:absolute;left:225.0px;top:421.96px;" width="16" height="16" viewBox="0 0 16 16"><path d="M0.6 0.6 H12.1 L15.4 3.9 V15.4 L13.9 15.2 L12.3 13.8 L9.5 13.5 L5.8 14.4 L3.6 13.1 L0.6 12.5 Z" fill="#fff" stroke="#bcbcbc" stroke-width="0.9"/><path d="M15.4 3.9 V15.4 L13.9 15.2 L12.3 13.8 L9.5 13.5 L5.8 14.4 L3.6 13.1 L0.6 12.5" fill="none" stroke="#a2a2a2" stroke-width="0.9"/><path d="M12.1 0.6 V3.9 H15.4" fill="none" stroke="#c8c8c8" stroke-width="0.8"/><g><path d="M2.3 5.5 C3.3 4.4 5.9 4.5 5.9 6.5 V10.2" fill="none" stroke="#e24a22" stroke-width="1.6"/><ellipse cx="3.85" cy="8.5" rx="1.15" ry="0.95" fill="none" stroke="#e24a22" stroke-width="1.6"/><rect x="8.0" y="2.9" width="1.65" height="7.3" fill="#e24a22"/><ellipse cx="11.0" cy="7.55" rx="1.55" ry="1.7" fill="none" stroke="#e24a22" stroke-width="1.6"/></g></svg><div class="t" style="left:242.58px;top:423.86px;transform:scaleX(1.0169);">ScrollWidth</div><div class="t" style="left:346.09px;top:423.86px;transform:scaleX(0.8106);">REG_SZ</div><div class="t" style="left:466.20px;top:423.86px;transform:scaleX(0.9460);">-255</div><svg style="position:absolute;left:225.0px;top:440.84px;" width="16" height="16" viewBox="0 0 16 16"><path d="M0.6 0.6 H12.1 L15.4 3.9 V15.4 L13.9 15.2 L12.3 13.8 L9.5 13.5 L5.8 14.4 L3.6 13.1 L0.6 12.5 Z" fill="#fff" stroke="#bcbcbc" stroke-width="0.9"/><path d="M15.4 3.9 V15.4 L13.9 15.2 L12.3 13.8 L9.5 13.5 L5.8 14.4 L3.6 13.1 L0.6 12.5" fill="none" stroke="#a2a2a2" stroke-width="0.9"/><path d="M12.1 0.6 V3.9 H15.4" fill="none" stroke="#c8c8c8" stroke-width="0.8"/><g><path d="M2.3 5.5 C3.3 4.4 5.9 4.5 5.9 6.5 V10.2" fill="none" stroke="#e24a22" stroke-width="1.6"/><ellipse cx="3.85" cy="8.5" rx="1.15" ry="0.95" fill="none" stroke="#e24a22" stroke-width="1.6"/><rect x="8.0" y="2.9" width="1.65" height="7.3" fill="#e24a22"/><ellipse cx="11.0" cy="7.55" rx="1.55" ry="1.7" fill="none" stroke="#e24a22" stroke-width="1.6"/></g></svg><div class="t" style="left:242.66px;top:442.74px;transform:scaleX(0.9359);">Shell Icon Size</div><div class="t" style="left:346.09px;top:442.74px;transform:scaleX(0.8106);">REG_SZ</div><div class="t" style="left:466.20px;top:442.74px;transform:scaleX(0.9200);">32</div><svg style="position:absolute;left:225.0px;top:459.72px;" width="16" height="16" viewBox="0 0 16 16"><path d="M0.6 0.6 H12.1 L15.4 3.9 V15.4 L13.9 15.2 L12.3 13.8 L9.5 13.5 L5.8 14.4 L3.6 13.1 L0.6 12.5 Z" fill="#fff" stroke="#bcbcbc" stroke-width="0.9"/><path d="M15.4 3.9 V15.4 L13.9 15.2 L12.3 13.8 L9.5 13.5 L5.8 14.4 L3.6 13.1 L0.6 12.5" fill="none" stroke="#a2a2a2" stroke-width="0.9"/><path d="M12.1 0.6 V3.9 H15.4" fill="none" stroke="#c8c8c8" stroke-width="0.8"/><ellipse cx="4.8" cy="4.9" rx="1.75" ry="1.2" fill="none" stroke="#1f4edb" stroke-width="1.4"/><rect x="8.2" y="3.0" width="1.45" height="3.8" fill="#1f4edb"/><rect x="11.2" y="3.0" width="1.6" height="3.8" fill="#1f4edb"/><rect x="3.25" y="8.2" width="1.5" height="3.8" fill="#1f4edb"/><rect x="6.15" y="8.2" width="1.5" height="3.8" fill="#1f4edb"/><ellipse cx="11.75" cy="10.1" rx="1.85" ry="1.2" fill="none" stroke="#1f4edb" stroke-width="1.4"/></svg><div class="t" style="left:242.61px;top:461.62px;transform:scaleX(0.9880);">SmCaptionFont</div><div class="t" style="left:346.04px;top:461.62px;transform:scaleX(0.8618);">REG_BINARY</div><div class="t" style="left:465.70px;top:461.62px;transform:scaleX(1.0525);">f4 ff ff ff</div><div class="t" style="left:511.90px;top:461.62px;transform:scaleX(0.8876);">00 00 00 00 00 00 00 00 00 00 00 00 90 01 0...</div><svg style="position:absolute;left:225.0px;top:478.6px;" width="16" height="16" viewBox="0 0 16 16"><path d="M0.6 0.6 H12.1 L15.4 3.9 V15.4 L13.9 15.2 L12.3 13.8 L9.5 13.5 L5.8 14.4 L3.6 13.1 L0.6 12.5 Z" fill="#fff" stroke="#bcbcbc" stroke-width="0.9"/><path d="M15.4 3.9 V15.4 L13.9 15.2 L12.3 13.8 L9.5 13.5 L5.8 14.4 L3.6 13.1 L0.6 12.5" fill="none" stroke="#a2a2a2" stroke-width="0.9"/><path d="M12.1 0.6 V3.9 H15.4" fill="none" stroke="#c8c8c8" stroke-width="0.8"/><g><path d="M2.3 5.5 C3.3 4.4 5.9 4.5 5.9 6.5 V10.2" fill="none" stroke="#e24a22" stroke-width="1.6"/><ellipse cx="3.85" cy="8.5" rx="1.15" ry="0.95" fill="none" stroke="#e24a22" stroke-width="1.6"/><rect x="8.0" y="2.9" width="1.65" height="7.3" fill="#e24a22"/><ellipse cx="11.0" cy="7.55" rx="1.55" ry="1.7" fill="none" stroke="#e24a22" stroke-width="1.6"/></g></svg><div class="t" style="left:242.59px;top:480.50px;transform:scaleX(1.0086);">SmCaptionHeight</div><div class="t" style="left:346.09px;top:480.50px;transform:scaleX(0.8106);">REG_SZ</div><div class="t" style="left:466.20px;top:480.50px;transform:scaleX(0.9458);">-330</div><svg style="position:absolute;left:225.0px;top:497.48px;" width="16" height="16" viewBox="0 0 16 16"><path d="M0.6 0.6 H12.1 L15.4 3.9 V15.4 L13.9 15.2 L12.3 13.8 L9.5 13.5 L5.8 14.4 L3.6 13.1 L0.6 12.5 Z" fill="#fff" stroke="#bcbcbc" stroke-width="0.9"/><path d="M15.4 3.9 V15.4 L13.9 15.2 L12.3 13.8 L9.5 13.5 L5.8 14.4 L3.6 13.1 L0.6 12.5" fill="none" stroke="#a2a2a2" stroke-width="0.9"/><path d="M12.1 0.6 V3.9 H15.4" fill="none" stroke="#c8c8c8" stroke-width="0.8"/><g><path d="M2.3 5.5 C3.3 4.4 5.9 4.5 5.9 6.5 V10.2" fill="none" stroke="#e24a22" stroke-width="1.6"/><ellipse cx="3.85" cy="8.5" rx="1.15" ry="0.95" fill="none" stroke="#e24a22" stroke-width="1.6"/><rect x="8.0" y="2.9" width="1.65" height="7.3" fill="#e24a22"/><ellipse cx="11.0" cy="7.55" rx="1.55" ry="1.7" fill="none" stroke="#e24a22" stroke-width="1.6"/></g></svg><div class="t" style="left:242.59px;top:499.38px;transform:scaleX(1.0090);">SmCaptionWidth</div><div class="t" style="left:346.09px;top:499.38px;transform:scaleX(0.8106);">REG_SZ</div><div class="t" style="left:466.20px;top:499.38px;transform:scaleX(0.9458);">-330</div><svg style="position:absolute;left:225.0px;top:516.36px;" width="16" height="16" viewBox="0 0 16 16"><path d="M0.6 0.6 H12.1 L15.4 3.9 V15.4 L13.9 15.2 L12.3 13.8 L9.5 13.5 L5.8 14.4 L3.6 13.1 L0.6 12.5 Z" fill="#fff" stroke="#bcbcbc" stroke-width="0.9"/><path d="M15.4 3.9 V15.4 L13.9 15.2 L12.3 13.8 L9.5 13.5 L5.8 14.4 L3.6 13.1 L0.6 12.5" fill="none" stroke="#a2a2a2" stroke-width="0.9"/><path d="M12.1 0.6 V3.9 H15.4" fill="none" stroke="#c8c8c8" stroke-width="0.8"/><ellipse cx="4.8" cy="4.9" rx="1.75" ry="1.2" fill="none" stroke="#1f4edb" stroke-width="1.4"/><rect x="8.2" y="3.0" width="1.45" height="3.8" fill="#1f4edb"/><rect x="11.2" y="3.0" width="1.6" height="3.8" fill="#1f4edb"/><rect x="3.25" y="8.2" width="1.5" height="3.8" fill="#1f4edb"/><rect x="6.15" y="8.2" width="1.5" height="3.8" fill="#1f4edb"/><ellipse cx="11.75" cy="10.1" rx="1.85" ry="1.2" fill="none" stroke="#1f4edb" stroke-width="1.4"/></svg><div class="t" style="left:242.63px;top:518.26px;transform:scaleX(0.9719);">StatusFont</div><div class="t" style="left:346.04px;top:518.26px;transform:scaleX(0.8618);">REG_BINARY</div><div class="t" style="left:465.70px;top:518.26px;transform:scaleX(1.0525);">f4 ff ff ff</div><div class="t" style="left:511.90px;top:518.26px;transform:scaleX(0.8876);">00 00 00 00 00 00 00 00 00 00 00 00 90 01 0...</div><div style="position:absolute;left:229.5px;top:401.9px;width:86.5px;height:16.1px;background:#ffff00;mix-blend-mode:multiply"></div><div style="position:absolute;left:227.0px;top:423.5px;width:83.9px;height:15.7px;background:#ffff00;mix-blend-mode:multiply"></div>
</body></html>
